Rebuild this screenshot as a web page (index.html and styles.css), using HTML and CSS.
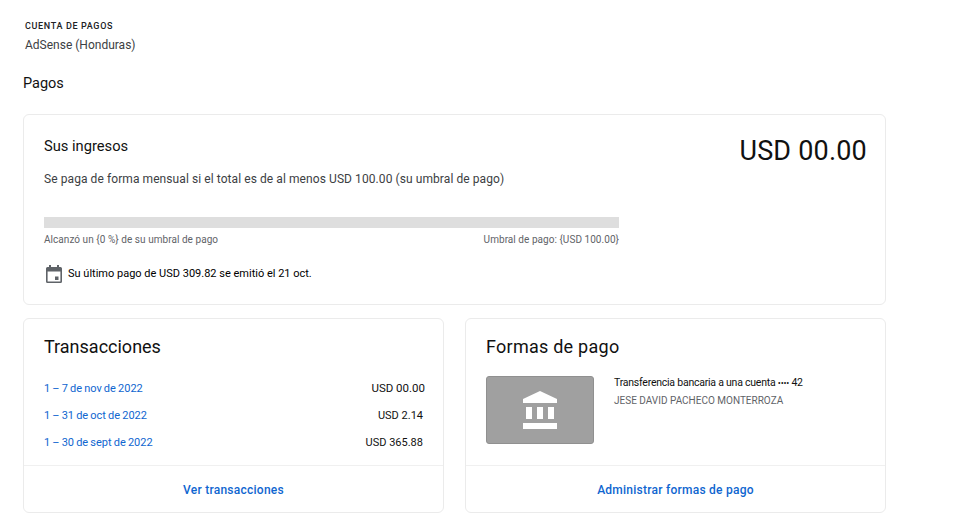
FILE: index.html
```html
<!DOCTYPE html>
<html lang="es">
<head>
<meta charset="utf-8">
<title>Pagos</title>
<link rel="stylesheet" href="styles.css">
</head>
<body>
<main class="page">
  <header class="account">
    <div class="account-label">CUENTA DE PAGOS</div>
    <div class="account-name">AdSense (Honduras)</div>
  </header>
  <h1 class="page-title">Pagos</h1>
  <section class="card earnings">
    <div class="earnings-top">
      <div>
        <h2 class="earnings-title">Sus ingresos</h2>
        <p class="earnings-desc">Se paga de forma mensual si el total es de al menos USD 100.00 (su umbral de pago)</p>
      </div>
      <div class="balance">USD 00.00</div>
    </div>
    <div class="progress"></div>
    <div class="progress-labels">
      <span>Alcanzó un {0 %} de su umbral de pago</span>
      <span>Umbral de pago: {USD 100.00}</span>
    </div>
    <div class="last-payment">
      <svg class="calendar" width="16" height="18" viewBox="0 0 16 18"><path fill="#5f6368" d="M3 0h2v2h6V0h2v2h1.500A1.500 1.500 0 0 1 16 3.500v13a1.500 1.500 0 0 1-1.500 1.500h-13A1.500 1.500 0 0 1 0 16.500v-13A1.500 1.500 0 0 1 1.500 2H3zM1.600 6.500v10h12.800v-10zM9 11.500h3.500V15H9z"/></svg>
      <span>Su último pago de USD 309.82 se emitió el 21 oct.</span>
    </div>
  </section>
  <div class="columns">
    <section class="card panel">
      <div class="panel-body">
        <h2 class="panel-title">Transacciones</h2>
        <ul class="tx-list">
          <li class="tx"><a class="link" href="#">1 – 7 de nov de 2022</a><span class="amount amount-first">USD 00.00</span></li>
          <li class="tx"><a class="link" href="#">1 – 31 de oct de 2022</a><span class="amount">USD 2.14</span></li>
          <li class="tx"><a class="link" href="#">1 – 30 de sept de 2022</a><span class="amount">USD 365.88</span></li>
        </ul>
      </div>
      <a class="panel-action" href="#">Ver transacciones</a>
    </section>
    <section class="card panel">
      <div class="panel-body">
        <h2 class="panel-title panel-title-wide">Formas de pago</h2>
        <div class="method">
          <div class="bank-thumb">
            <svg width="34" height="38" viewBox="0 0 34 38"><path fill="#fff" d="M17 0 34 8v4H0V8zM3 16h6v12H3zM14 16h6v12h-6zM25 16h6v12h-6zM0 32h34v6H0z"/></svg>
          </div>
          <div class="method-info">
            <div class="method-name">Transferencia bancaria a una cuenta <span class="dots">••••</span> 42</div>
            <div class="method-owner">JESE DAVID PACHECO MONTERROZA</div>
          </div>
        </div>
      </div>
      <a class="panel-action" href="#">Administrar formas de pago</a>
    </section>
  </div>
</main>
</body>
</html>
```
FILE: styles.css
```css
* { box-sizing: border-box; }
html, body { margin: 0; padding: 0; background: #fff; }
body { font-family: Roboto, "Liberation Sans", sans-serif; color: #202124; height: 528px; overflow: hidden; }
.page { width: 886px; margin-left: 23px; padding-top: 21px; }
.account { padding-left: 2px; }
.account-label { font-size: 9px; line-height: 11px; font-weight: 500; letter-spacing: .65px; color: #202124; }
.account-name { font-size: 12px; line-height: 16px; margin-top: 5px; letter-spacing: 0; color: #3c4043; }
.page-title { font-size: 14.500px; line-height: 20px; font-weight: 400; margin: 21px 0 20px; color: #111; }
.card { border: 1px solid #ebebeb; border-radius: 6px; background: #fff; width: 863px; }
.earnings { height: 191px; padding: 21px 18px 0 20px; }
.earnings-top { display: flex; justify-content: space-between; align-items: flex-start; }
.earnings-title { font-size: 14.700px; line-height: 20px; font-weight: 400; margin: 0; color: #111; }
.earnings-desc { font-size: 12px; line-height: 16px; margin: 15px 0 0; letter-spacing: .08px; color: #3c4043; }
.balance { font-size: 27px; line-height: 30px; letter-spacing: .2px; color: #111; }
.progress { width: 575px; height: 11px; background: #dedede; margin-top: 30px; }
.progress-labels { width: 575px; display: flex; justify-content: space-between; font-size: 10px; line-height: 14px; margin-top: 5px; letter-spacing: .05px; color: #5f6368; }
.last-payment { display: flex; align-items: center; gap: 6px; margin-top: 18px; margin-left: 2px; font-size: 11px; line-height: 16px; color: #000; }
.calendar { flex: none; }
.columns { display: flex; gap: 21px; margin-top: 13px; width: 863px; }
.panel { width: 421px; height: 195px; display: flex; flex-direction: column; }
.panel-body { flex: 1; padding: 16px 20px 0; }
.panel-title { font-size: 18px; line-height: 24px; font-weight: 400; margin: 0; color: #111; }
.panel-title-wide { letter-spacing: .25px; }
.tx-list { list-style: none; margin: 22px 0 0; padding: 0; }
.tx { display: flex; justify-content: space-between; height: 27px; font-size: 11px; line-height: 16px; }
.link { color: #0f66d0; text-decoration: none; word-spacing: -.6px; }
.amount { color: #111; }
.amount-first { margin-right: -2px; margin-top: -1px; font-size: 11.500px; }
.panel-action { display: block; height: 47px; border-top: 1px solid #f0f0f0; text-align: center; font-size: 12px; line-height: 48px; font-weight: 500; color: #0f66d0; text-decoration: none; letter-spacing: .25px; }
.method { display: flex; gap: 20px; margin-top: 17px; }
.bank-thumb { flex: none; width: 108px; height: 68px; background: #a0a0a0; border: 1px solid #909090; border-radius: 3px; display: flex; align-items: center; justify-content: center; }
.method-name { font-size: 10.500px; line-height: 14px; letter-spacing: -.23px; color: #111; }
.dots { font-size: 9px; }
.method-owner { font-size: 10px; line-height: 14px; margin-top: 4px; color: #5f6368; }
```
